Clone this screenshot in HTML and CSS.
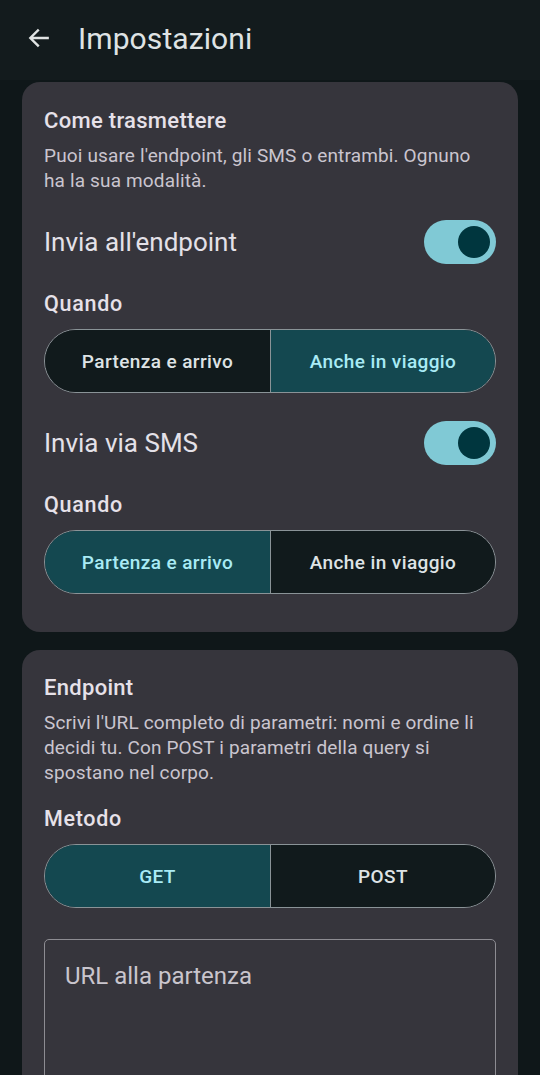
FILE: index.html
```html
<!DOCTYPE html>
<html lang="it">
<head>
<meta charset="utf-8">
<title>Impostazioni</title>
<link rel="stylesheet" href="styles.css">
</head>
<body>
<header class="appbar">
  <svg class="back" viewBox="0 0 24 24" width="26" height="26" aria-hidden="true">
    <path d="M20 12H5M11 5l-7 7 7 7" fill="none" stroke="#e0e3e3" stroke-width="2.2" stroke-linecap="square" stroke-linejoin="miter"/>
  </svg>
  <h1 class="title">Impostazioni</h1>
</header>
<main class="content">
  <section class="card card-first">
    <h2 class="card-title">Come trasmettere</h2>
    <p class="desc">Puoi usare l'endpoint, gli SMS o entrambi. Ognuno ha la sua modalità.</p>

    <div class="row">
      <span class="row-label">Invia all'endpoint</span>
      <span class="switch"><span class="thumb"></span></span>
    </div>
    <div class="label">Quando</div>
    <div class="seg">
      <div class="seg-item">Partenza e arrivo</div>
      <div class="seg-item is-on">Anche in viaggio</div>
    </div>

    <div class="row">
      <span class="row-label">Invia via SMS</span>
      <span class="switch"><span class="thumb"></span></span>
    </div>
    <div class="label">Quando</div>
    <div class="seg">
      <div class="seg-item is-on">Partenza e arrivo</div>
      <div class="seg-item">Anche in viaggio</div>
    </div>
  </section>

  <section class="card card-endpoint">
    <h2 class="card-title">Endpoint</h2>
    <p class="desc">Scrivi l'URL completo di parametri: nomi e ordine li decidi tu. Con POST i parametri della query si spostano nel corpo.</p>
    <div class="label label-method">Metodo</div>
    <div class="seg">
      <div class="seg-item is-on">GET</div>
      <div class="seg-item">POST</div>
    </div>
    <div class="field">
      <span class="placeholder">URL alla partenza</span>
    </div>
  </section>
</main>
</body>
</html>
```

FILE: styles.css
```css
* { box-sizing: border-box; }
html, body {
  margin: 0;
  padding: 0;
  background: #0f1719;
  font-family: Roboto, "Noto Sans", "Liberation Sans", sans-serif;
  color: #e4e1e8;
}
body { overflow: hidden; height: 1075px; }

.appbar {
  height: 80px;
  background: #131b1d;
  display: flex;
  align-items: center;
  padding-left: 26px;
}
.back { flex: none; margin-top: -4px; }
.title {
  margin: -4px 0 0 26px;
  font-size: 30px;
  font-weight: 400;
  color: #dfe3e4;
  letter-spacing: 0.1px;
}

.content {
  padding: 2px 22px 0;
  display: flex;
  flex-direction: column;
  gap: 18px;
}
.card {
  background: #36353c;
  border-radius: 18px;
  padding: 25px 22px 38px;
}
.card-endpoint { padding-top: 24px; }

.card-title {
  margin: 0;
  font-size: 22px;
  line-height: 28px;
  font-weight: 500;
  letter-spacing: 0.3px;
  color: #e6e1e9;
}
.desc {
  margin: 8px 0 0;
  font-size: 19px;
  line-height: 25px;
  letter-spacing: 0.15px;
  color: #cac5cf;
  padding-right: 20px;
}

.row {
  display: flex;
  align-items: center;
  justify-content: space-between;
  height: 44px;
  margin-top: 27px;
}
.seg + .row { margin-top: 28px; }
.row-label {
  font-size: 26px;
  color: #e4e1e8;
}
.switch {
  width: 72px;
  height: 44px;
  border-radius: 22px;
  background: #80c9d5;
  display: flex;
  align-items: center;
  justify-content: flex-end;
  padding-right: 6px;
}
.thumb {
  width: 32px;
  height: 32px;
  border-radius: 50%;
  background: #00363e;
}

.label {
  margin-top: 26px;
  font-size: 21.5px;
  line-height: 28px;
  font-weight: 500;
  letter-spacing: 0.7px;
  color: #e6e1e9;
}
.label-method { margin-top: 20px; }

.seg {
  margin-top: 11px;
  height: 64px;
  border: 1.5px solid #8a9397;
  border-radius: 32px;
  display: grid;
  grid-template-columns: 1fr 1fr;
  overflow: hidden;
}
.seg-item {
  display: flex;
  align-items: center;
  justify-content: center;
  background: #111a1c;
  color: #dee3e5;
  font-size: 19px;
  font-weight: 500;
  letter-spacing: 0.4px;
}
.seg-item + .seg-item { border-left: 1.5px solid #8a9397; }
.seg-item.is-on {
  background: #144850;
  color: #a9ebf5;
}

.field {
  margin-top: 31px;
  height: 170px;
  border: 1.5px solid #8d8c92;
  border-radius: 5px;
  padding: 21px 20px;
}
.placeholder {
  font-size: 24px;
  line-height: 30px;
  color: #c9c5cd;
}
```
